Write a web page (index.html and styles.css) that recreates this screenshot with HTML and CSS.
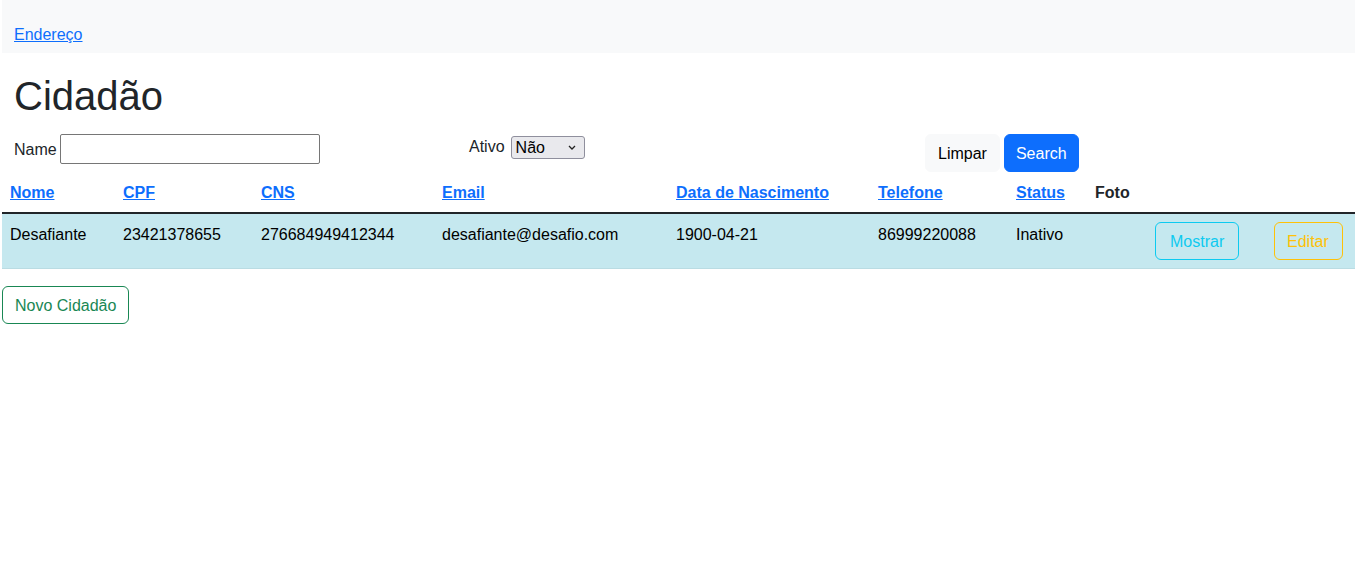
FILE: index.html
```html
<!DOCTYPE html>
<html lang="pt-BR">
<head>
<meta charset="utf-8">
<title>Cidadão</title>
<link rel="stylesheet" href="styles.css">
</head>
<body>
<nav class="navbar">
  <a href="#" class="nav-link">Endereço</a>
</nav>
<div class="container">
  <h1 class="title">Cidadão</h1>
  <form class="filters">
    <div class="field">
      <label for="name">Name</label>
      <input id="name" type="text" class="text-input">
    </div>
    <div class="field field-select">
      <label for="ativo">Ativo</label>
      <span class="select-wrap">
        <select id="ativo" class="select">
          <option>Não</option>
          <option>Sim</option>
        </select>
        <svg class="chevron" width="8" height="5" viewBox="0 0 8 5" aria-hidden="true"><path d="M1 1l3 3 3-3" fill="none" stroke="#222" stroke-width="1.3"/></svg>
      </span>
    </div>
    <div class="actions">
      <button type="button" class="btn btn-light">Limpar</button>
      <button type="submit" class="btn btn-primary">Search</button>
    </div>
  </form>
</div>
<table class="table">
  <colgroup>
    <col class="c-nome"><col class="c-cpf"><col class="c-cns"><col class="c-email"><col class="c-data"><col class="c-tel"><col class="c-status"><col class="c-foto"><col class="c-show"><col class="c-edit">
  </colgroup>
  <thead>
    <tr>
      <th><a href="#">Nome</a></th>
      <th><a href="#">CPF</a></th>
      <th><a href="#">CNS</a></th>
      <th><a href="#">Email</a></th>
      <th><a href="#">Data de Nascimento</a></th>
      <th><a href="#">Telefone</a></th>
      <th><a href="#">Status</a></th>
      <th>Foto</th>
      <th></th>
      <th></th>
    </tr>
  </thead>
  <tbody>
    <tr class="row-info">
      <td class="txt">Desafiante</td>
      <td class="txt">23421378655</td>
      <td class="txt">276684949412344</td>
      <td class="txt">desafiante@desafio.com</td>
      <td class="txt">1900-04-21</td>
      <td class="txt">86999220088</td>
      <td class="txt">Inativo</td>
      <td></td>
      <td><a href="#" class="btn btn-outline-info">Mostrar</a></td>
      <td><a href="#" class="btn btn-outline-warning">Editar</a></td>
    </tr>
  </tbody>
</table>
<a href="#" class="btn btn-outline-success">Novo Cidadão</a>
</body>
</html>
```
FILE: styles.css
```css
* { box-sizing: border-box; }

body {
  margin: 0;
  padding: 0 0 0 2px;
  font-family: "Liberation Sans", Arial, sans-serif;
  font-size: 16px;
  line-height: 24px;
  color: #212529;
  background: #fff;
}

a { color: #0d6efd; }

.navbar {
  background: #f8f9fa;
  padding: 23px 12px 6px;
  height: 53px;
}

.nav-link {
  color: #0d6efd;
  text-decoration: underline;
}

.container {
  padding: 0 12px;
}

.title {
  margin: 19px 0 14px;
  font-size: 40px;
  line-height: 48px;
  font-weight: 500;
}

.filters {
  display: grid;
  grid-template-columns: 455px 456px auto;
  align-items: start;
}

.field {
  display: flex;
  align-items: center;
  gap: 3px;
  padding-top: 1px;
}

.field-select {
  gap: 6px;
}

.text-input {
  width: 260px;
  height: 30px;
  margin-top: -1px;
  border: 1px solid #767676;
  border-radius: 2px;
  font: inherit;
  padding: 1px 3px;
  background: #fff;
}

.select-wrap {
  position: relative;
  display: inline-block;
  height: 23px;
}

.select {
  -webkit-appearance: none;
  appearance: none;
  width: 74px;
  height: 23px;
  padding: 0 0 0 4px;
  font-family: inherit;
  font-size: 16px;
  line-height: 21px;
  color: #000;
  background: #e9e9ed;
  border: 1px solid #8f8f9d;
  border-radius: 3px;
}

.chevron {
  position: absolute;
  right: 9px;
  top: 9px;
  pointer-events: none;
}

.actions {
  display: flex;
  gap: 4px;
}

.btn {
  display: inline-block;
  padding: 7px 12px 5px;
  font-family: inherit;
  font-size: 16px;
  line-height: 24px;
  border: 1px solid transparent;
  border-radius: 6px;
  text-decoration: none;
  cursor: pointer;
  background: transparent;
}

.btn-light {
  background: #f8f9fa;
  border-color: #f8f9fa;
  color: #000;
}

.btn-primary {
  background: #0d6efd;
  border-color: #0d6efd;
  color: #fff;
  padding-left: 11px;
  padding-right: 11px;
}

.btn-outline-info {
  color: #0dcaf0;
  border-color: #0dcaf0;
  padding-left: 14px;
  padding-right: 14px;
}

.btn-outline-warning {
  color: #ffc107;
  border-color: #ffc107;
  padding-left: 12px;
  padding-right: 13px;
}

.btn-outline-success {
  color: #198754;
  border-color: #198754;
}

.table {
  width: 1353px;
  table-layout: fixed;
  border-collapse: collapse;
  margin-bottom: 17px;
}

.c-nome { width: 113px; }
.c-cpf { width: 138px; }
.c-cns { width: 181px; }
.c-email { width: 234px; }
.c-data { width: 202px; }
.c-tel { width: 138px; }
.c-status { width: 79px; }
.c-foto { width: 60px; }
.c-show { width: 119px; }
.c-edit { width: 89px; }

.table th,
.table td {
  padding: 8px;
  text-align: left;
  vertical-align: top;
  white-space: nowrap;
}

.table thead th {
  font-weight: bold;
  border-bottom: 2px solid #212529;
  padding: 9px 8px 7px;
}

.table thead th a {
  color: #0d6efd;
  text-decoration: underline;
}

.row-info td {
  background: #c5e8ef;
  border-bottom: 1px solid #badce3;
  color: #000;
}

.row-info td.txt {
  padding-top: 9px;
}
```
